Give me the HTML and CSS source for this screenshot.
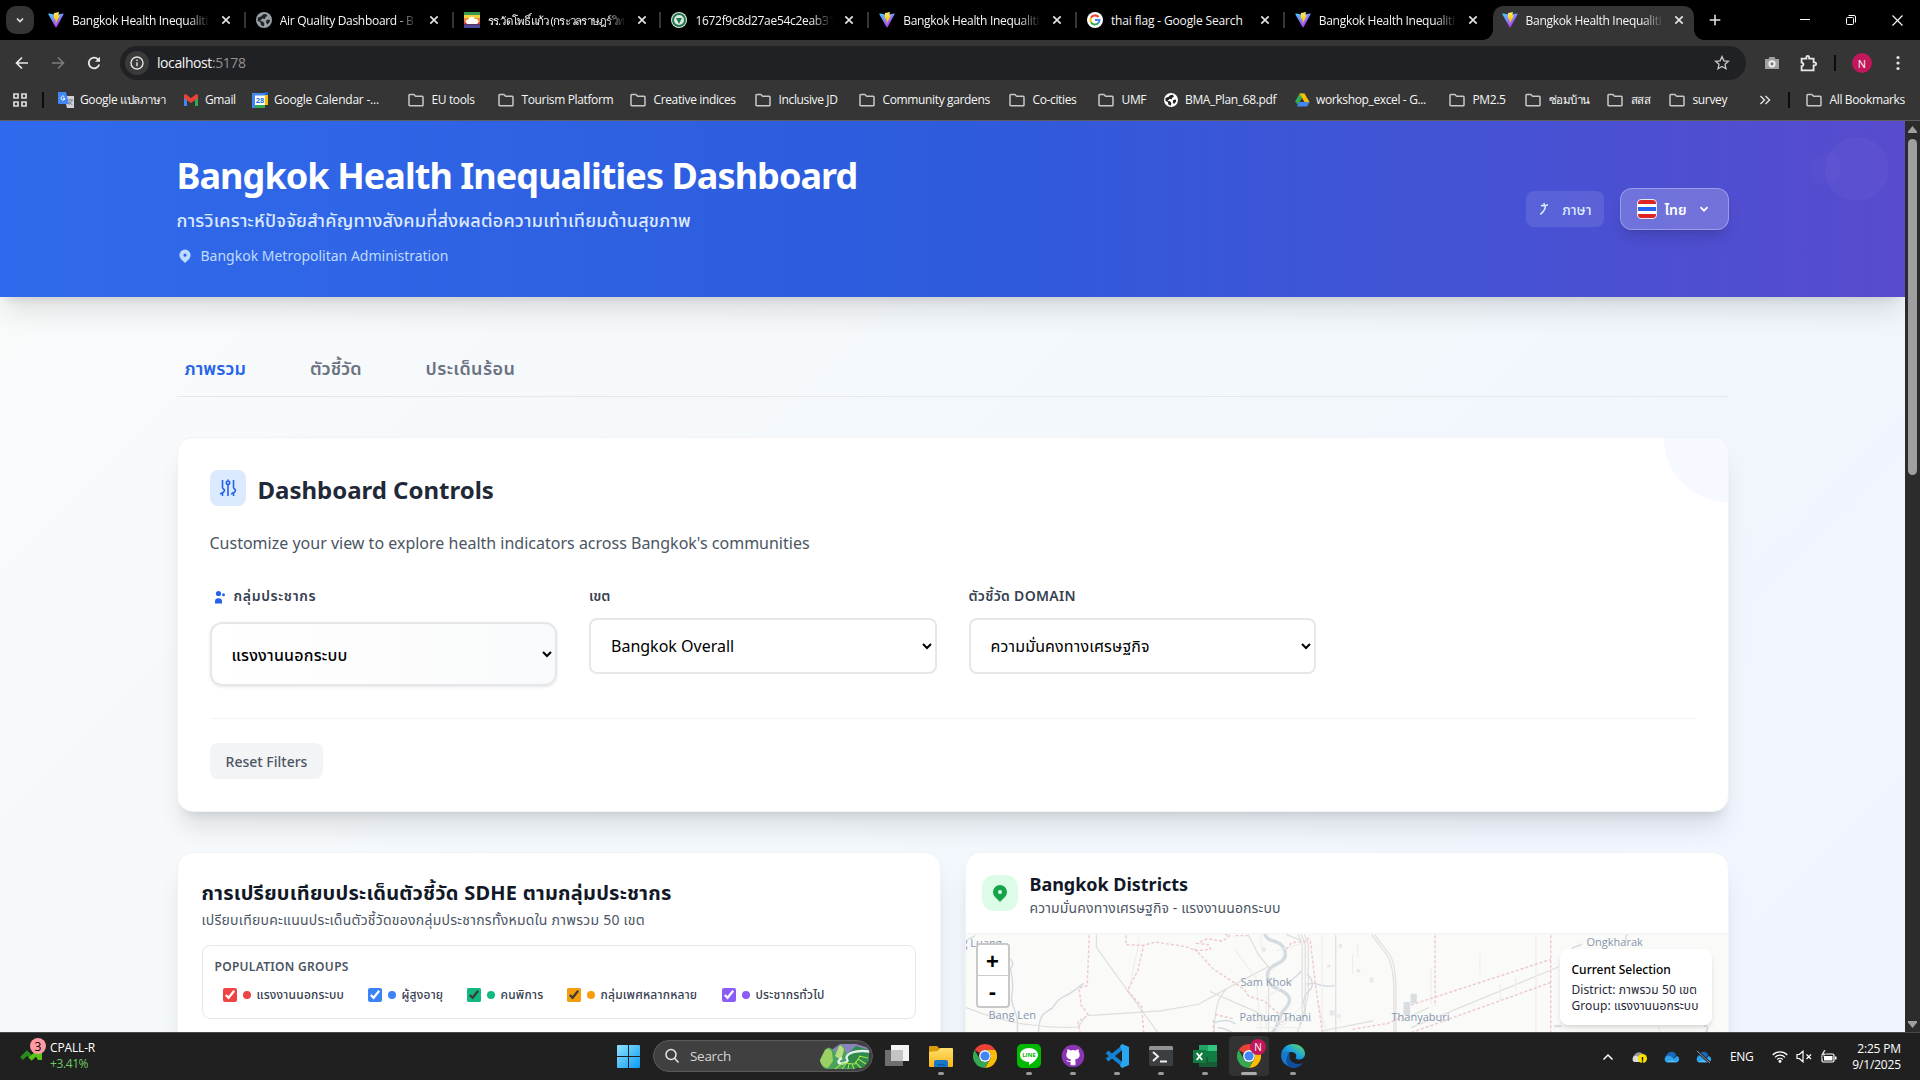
FILE: index.html
```html
<!DOCTYPE html>
<html lang="th">
<head>
<meta charset="utf-8">
<title>Bangkok Health Inequalities Dashboard</title>
<link rel="stylesheet" href="styles.css">
</head>
<body>
<svg class="defs" width="0" height="0" aria-hidden="true">
  <defs>
    <linearGradient id="gv" x1="0" y1="0" x2=".6" y2="1"><stop offset="0" stop-color="#41d1ff"/><stop offset="1" stop-color="#bd34fe"/></linearGradient>
    <linearGradient id="gy" x1="0" y1="0" x2="0" y2="1"><stop offset="0" stop-color="#ffea83"/><stop offset=".3" stop-color="#ffdd35"/><stop offset="1" stop-color="#ffa800"/></linearGradient>
    <linearGradient id="gw" x1="0" y1="0" x2="1" y2="1"><stop offset="0" stop-color="#8fe3ff"/><stop offset="1" stop-color="#0a9bf2"/></linearGradient>
    <linearGradient id="ge" x1="0" y1="1" x2="1" y2="0"><stop offset="0" stop-color="#0c59a4"/><stop offset=".5" stop-color="#1ba1e2"/><stop offset="1" stop-color="#6be04a"/></linearGradient>
    <linearGradient id="gf" x1="0" y1="0" x2="0" y2="1"><stop offset="0" stop-color="#ffdf6e"/><stop offset="1" stop-color="#f9b514"/></linearGradient>
  </defs>
  <symbol id="vite" viewBox="0 0 32 32"><path fill="url(#gv)" d="M31 5.2 17.2 30a1.3 1.3 0 0 1-2.2 0L.9 5.200C.300 4.100 1.200 2.900 2.400 3.100L16 5.500l13.500-2.400c1.200-.2 2.100 1 1.500 2.100z"/><path fill="url(#gy)" d="M22.400.1 12.300 2.100a.4.4 0 0 0-.3.400l-.6 10.600c0 .3.200.5.500.4l2.800-.6-.8 4.100c-.1.300.2.500.4.4l1.800-.5-1.300 6.400c-.1.4.5.6.7.3l8.200-16.600c.1-.3-.1-.6-.4-.5l-3 .6 1.900-6.600c.1-.2-.2-.4-.5-.4z"/></symbol>
  <symbol id="globe" viewBox="0 0 16 16"><circle cx="8" cy="8" r="8" fill="currentColor"/><path class="land" d="M7 2.500 10 2l1.500 2-2 1-.5 2-2.500-.5L4 9l3 .5L8.500 12 7.500 14.500 5 13 4.500 10.500 1.500 8.500 2 5.500l3-1zM10.500 8l3-.5.500 2-2.500 3-1.500-2z"/></symbol>
  <symbol id="x" viewBox="0 0 12 12"><path d="M2.300 2.300l7.400 7.400M9.700 2.300L2.300 9.700" stroke="#e3e3e3" stroke-width="1.700"/></symbol>
  <symbol id="folder" viewBox="0 0 16 16"><path d="M1 3.200c0-.5.300-.8.800-.8h4.100l1.700 1.800h6.600c.5 0 .8.300.8.800v7.900c0 .5-.3.800-.8.800H1.800c-.5 0-.8-.3-.8-.8z" fill="none" stroke="#c7c7c7" stroke-width="1.500"/></symbol>
  <symbol id="chrome" viewBox="0 0 24 24"><path fill="#ea4335" d="M12 0a12 12 0 0 1 10.400 6H12a6 6 0 0 0-5.200 3L1.600 6A12 12 0 0 1 12 0z"/><path fill="#fbbc04" d="M22.400 6A12 12 0 0 1 12 24l5.200-9A6 6 0 0 0 12 6z"/><path fill="#34a853" d="M1.600 6l5.200 9A6 6 0 0 0 17.200 15L12 24A12 12 0 0 1 1.600 6z"/><circle cx="12" cy="12" r="5.900" fill="#fff"/><circle cx="12" cy="12" r="4.600" fill="#4285f4"/></symbol>
  <symbol id="cloud" viewBox="0 0 18 12"><path fill="#1769c0" d="M4 10a4 4 0 0 1 0-6.500A5.500 5.500 0 0 1 14 4l-5 7z"/><path fill="#2ea3ea" d="M3.500 11.500a3.500 3.500 0 0 1 1-6.500c3-1 5 1.500 7 3l3-3a3.400 3.400 0 0 1 .5 6.500z"/><path fill="#56c1f7" d="M3.500 11.500C6 9 10 9 15 11.500z"/></symbol>
  <symbol id="pin" viewBox="0 0 20 20"><path fill="currentColor" fill-rule="evenodd" d="M5.050 4.050a7 7 0 1 1 9.900 9.900L10 18.900l-4.950-4.950a7 7 0 0 1 0-9.900zM10 11a2 2 0 1 0 0-4 2 2 0 0 0 0 4z"/></symbol>
</svg>

<div class="screen">
  <header class="browser">
    <div class="tabstrip">
      <button class="tabsearch"><svg width="10" height="10" viewBox="0 0 10 10"><path d="M2 3.500l3 3 3-3" fill="none" stroke="#e3e3e3" stroke-width="1.700"/></svg></button>
      <div class="tabs">
        <div class="tab"><svg class="fav"><use href="#vite"/></svg><span class="tt">Bangkok Health Inequaliti</span><svg class="cl"><use href="#x"/></svg></div>
        <div class="tab"><svg class="fav gray"><use href="#globe"/></svg><span class="tt">Air Quality Dashboard - B</span><svg class="cl"><use href="#x"/></svg></div>
        <div class="tab"><svg class="fav" viewBox="0 0 16 16"><path fill="#3c9a50" d="M0 0h16v4H0z"/><path fill="#f3d03e" d="M0 3h16v3H0z"/><path fill="#ef8a3c" d="M0 6h16v4H0z"/><path fill="#d8433b" d="M0 10h16v2.500H0z"/><path fill="#4a4a9c" d="M0 12.500h16V16H0z"/><path fill="#fff" d="M4 12a2.300 2.300 0 0 1 .2-4.600A3.600 3.600 0 0 1 11 7a2.500 2.500 0 0 1 1.500 5z"/></svg><span class="tt th">รร.วัดโพธิ์แก้ว (กระวลราษฎร์วิท</span><svg class="cl"><use href="#x"/></svg></div>
        <div class="tab"><svg class="fav" viewBox="0 0 16 16"><circle cx="8" cy="8" r="8" fill="#dfe8e2"/><circle cx="8" cy="8" r="6" fill="none" stroke="#1c7a4c" stroke-width="2"/><path d="M5 6h6l-3 6z" fill="#1c7a4c"/></svg><span class="tt">1672f9c8d27ae54c2eab31</span><svg class="cl"><use href="#x"/></svg></div>
        <div class="tab"><svg class="fav"><use href="#vite"/></svg><span class="tt">Bangkok Health Inequaliti</span><svg class="cl"><use href="#x"/></svg></div>
        <div class="tab"><svg class="fav" viewBox="0 0 16 16"><circle cx="8" cy="8" r="8" fill="#fff"/><g fill="none" stroke-width="2"><path stroke="#ea4335" d="M11.500 5A4.600 4.600 0 0 0 4 5.700"/><path stroke="#fbbc04" d="M4 5.700a4.600 4.600 0 0 0 0 4.600"/><path stroke="#34a853" d="M4 10.300a4.600 4.600 0 0 0 7 1"/><path stroke="#4285f4" d="M11 11.300A4.600 4.600 0 0 0 12.500 8H8"/></g></svg><span class="tt full">thai flag - Google Search</span><svg class="cl"><use href="#x"/></svg></div>
        <div class="tab last"><svg class="fav"><use href="#vite"/></svg><span class="tt">Bangkok Health Inequaliti</span><svg class="cl"><use href="#x"/></svg></div>
        <div class="tab active"><svg class="fav"><use href="#vite"/></svg><span class="tt">Bangkok Health Inequaliti</span><svg class="cl"><use href="#x"/></svg></div>
      </div>
      <svg class="newtab" width="12" height="12" viewBox="0 0 12 12"><path d="M6 .7v10.600M.7 6h10.600" stroke="#e3e3e3" stroke-width="1.600"/></svg>
      <div class="wincontrols">
        <svg width="10" height="10" viewBox="0 0 10 10"><path d="M0 4.500h10" stroke="#fff"/></svg>
        <svg width="10" height="10" viewBox="0 0 10 10" fill="none" stroke="#fff"><rect x=".5" y="2.500" width="7" height="7" rx="1"/><path d="M2.500.5H8A1.500 1.500 0 0 1 9.500 2v5.500"/></svg>
        <svg width="11" height="11" viewBox="0 0 11 11"><path d="M.5.500l10 10M10.500.5l-10 10" stroke="#fff" stroke-width="1.100"/></svg>
      </div>
    </div>

    <div class="toolbar">
      <div class="nav">
        <svg viewBox="0 0 16 16" width="16" height="16" fill="none" stroke="#e8e8e8" stroke-width="1.700"><path d="M14 8H3M8 2.500L2.500 8 8 13.500"/></svg>
        <svg viewBox="0 0 16 16" width="16" height="16" fill="none" stroke="#7d7d7d" stroke-width="1.500"><path d="M2 8h11M8 2.500L13.500 8 8 13.500"/></svg>
        <svg viewBox="0 0 16 16" width="16" height="16"><path d="M13.200 9.500A5.300 5.300 0 1 1 12 4.400l1 1" fill="none" stroke="#e8e8e8" stroke-width="1.800"/><path d="M14 1.800v5H9z" fill="#e8e8e8"/></svg>
      </div>
      <div class="omnibox">
        <span class="info"><svg viewBox="0 0 14 14" width="14" height="14"><circle cx="7" cy="7" r="6" fill="none" stroke="#e3e3e3" stroke-width="1.400"/><path d="M7 6.200v4M7 3.600v1.400" stroke="#e3e3e3" stroke-width="1.400"/></svg></span>
        <span class="url">localhost<i>:5178</i></span>
        <svg class="star" viewBox="0 0 16 16" width="16" height="16"><path d="M8 1.600l1.900 4.200 4.500.5-3.400 3 1 4.500L8 11.500l-4 2.300 1-4.500-3.400-3 4.500-.5z" fill="none" stroke="#c9c9c9" stroke-width="1.300"/></svg>
      </div>
      <div class="ext">
        <svg viewBox="0 0 16 16" width="16" height="16"><path d="M1 4h3.500l1-2h5l1 2H15v10H1z" fill="#a0a0a0"/><circle cx="8" cy="8.800" r="3.600" fill="#eee"/><circle cx="8" cy="8.800" r="1.600" fill="#777"/></svg>
        <svg class="puzzle" viewBox="0 0 16 16" width="17" height="17"><path d="M1.500 3.500H6V2.200a1.300 1.300 0 0 1 2.600 0v1.300h4.200V7h1a1.400 1.400 0 0 1 0 2.800h-1v4.700H1.500v-4a1.700 1.700 0 0 0 0-3.400z" fill="none" stroke="#e8e8e8" stroke-width="1.700"/></svg>
        <i class="vsep"></i>
        <span class="avatar">N</span>
        <svg class="dots" viewBox="0 0 4 16" width="4" height="16" fill="#e3e3e3"><circle cx="2" cy="2.500" r="1.600"/><circle cx="2" cy="8" r="1.600"/><circle cx="2" cy="13.500" r="1.600"/></svg>
      </div>
    </div>

    <div class="bookmarks">
      <svg class="apps" viewBox="0 0 14 14" width="14" height="14" fill="none" stroke="#dcdcdc" stroke-width="1.700"><path d="M1 1h4v4H1zM9 1h4v4H9zM1 9h4v4H1zM9 9h4v4H9z"/></svg>
      <i class="vsep"></i>
      <a class="bm tight w1"><svg viewBox="0 0 16 16"><path fill="#cfd3d8" d="M6 4h10v12H9z"/><path fill="#4285f4" d="M0 0h8l3 12H1a1 1 0 0 1-1-1z"/><path d="M7 6.500A2 2 0 1 1 6.300 4.500M5 6.400h2" stroke="#fff" fill="none"/><path d="M10 8h5M12.500 7v1m1.500 0c0 2-1.500 3.500-3.500 4.500M11 9.500c.5 1 1.500 2.500 3.500 3.500" stroke="#607080" fill="none" stroke-width=".8"/></svg><span>Google <small>แปลภาษา</small></span></a>
      <a class="bm tight w2"><svg viewBox="0 0 16 16"><path fill="#4285f4" d="M1 4l3 2v8H1z"/><path fill="#34a853" d="M12 6l3-2v10h-3z"/><path fill="#ea4335" d="M1 3.500C1 2 3 2 4 3l4 3.200L12 3c1-1 3-1 3 .5V6l-7 5-7-5z"/></svg><span>Gmail</span></a>
      <a class="bm tight w3"><svg viewBox="0 0 16 16"><path fill="#4285f4" d="M0 1h13v15H0z"/><path fill="#fbbc04" d="M13 3h3v10h-3z"/><path fill="#34a853" d="M3 13h10v3H3z"/><path fill="#1967d2" d="M13 0h3v3h-3z"/><path fill="#fff" d="M3 3.500h10V13H3z"/><text x="8" y="11" font-size="7.500" text-anchor="middle" fill="#1a73e8" font-weight="700">28</text></svg><span>Google Calendar -...</span></a>
      <a class="bm w4"><svg><use href="#folder"/></svg><span>EU tools</span></a>
      <a class="bm w5"><svg><use href="#folder"/></svg><span>Tourism Platform</span></a>
      <a class="bm w6"><svg><use href="#folder"/></svg><span>Creative indices</span></a>
      <a class="bm w7"><svg><use href="#folder"/></svg><span>Inclusive JD</span></a>
      <a class="bm w8"><svg><use href="#folder"/></svg><span>Community gardens</span></a>
      <a class="bm w9"><svg><use href="#folder"/></svg><span>Co-cities</span></a>
      <a class="bm w10"><svg><use href="#folder"/></svg><span>UMF</span></a>
      <a class="bm w11"><svg class="white"><use href="#globe"/></svg><span>BMA_Plan_68.pdf</span></a>
      <a class="bm tight w12"><svg viewBox="0 0 16 16"><path fill="#34a853" d="M5.500 1.500h5L4 13 1 9.500z"/><path fill="#fbbc04" d="M10.500 1.500L15.500 10h-5L5.500 1.500z"/><path fill="#ea4335" d="M10.500 10h5L13 14.500z"/><path fill="#4285f4" d="M5.500 10h10L13 14.500H3z"/></svg><span>workshop_excel - G...</span></a>
      <a class="bm w13"><svg><use href="#folder"/></svg><span>PM2.5</span></a>
      <a class="bm w14"><svg><use href="#folder"/></svg><span><small>ซ่อมบ้าน</small></span></a>
      <a class="bm w15"><svg><use href="#folder"/></svg><span><small>สสส</small></span></a>
      <a class="bm w16"><svg><use href="#folder"/></svg><span>survey</span></a>
      <svg class="more" viewBox="0 0 12 10" width="12" height="10" fill="none" stroke="#dcdcdc" stroke-width="1.500"><path d="M1.500 1l4 4-4 4M6.500 1l4 4-4 4"/></svg>
      <i class="vsep"></i>
      <a class="bm w17"><svg><use href="#folder"/></svg><span>All Bookmarks</span></a>
    </div>
  </header>

  <div class="viewport">
    <main class="page">
      <section class="hero">
        <i class="bubble big"></i><i class="bubble small"></i>
        <div class="container hero-row">
          <div class="hero-text">
            <h1>Bangkok Health Inequalities Dashboard</h1>
            <p class="hero-sub">การวิเคราะห์ปัจจัยสำคัญทางสังคมที่ส่งผลต่อความเท่าเทียมด้านสุขภาพ</p>
            <p class="hero-org"><svg width="16" height="16"><use href="#pin"/></svg><span>Bangkok Metropolitan Administration</span></p>
          </div>
          <div class="lang">
            <span class="lang-label"><svg width="14" height="14" viewBox="0 0 14 14" fill="none" stroke="currentColor" stroke-width="1.500"><path d="M4 3.300c2 .8 4 .8 7-.5M6.800 1l.8 2.500M8.300 3.500c.5 4-1.500 6-5 8.800"/></svg><b>ภาษา</b></span>
            <button class="lang-btn"><i class="flag"></i><b>ไทย</b><svg width="10" height="10" viewBox="0 0 10 10"><path d="M1.500 3.200L5 6.700l3.500-3.500" fill="none" stroke="#fff" stroke-width="1.700"/></svg></button>
          </div>
        </div>
      </section>

      <div class="container body">
        <nav class="page-tabs"><a class="on">ภาพรวม</a><a>ตัวชี้วัด</a><a class="hot">ประเด็นร้อน</a></nav>

        <section class="card controls">
          <i class="corner"></i>
          <div class="controls-head">
            <span class="icon-box"><svg width="20" height="20" viewBox="0 0 20 20" fill="none" stroke="#2563eb" stroke-width="1.600"><path d="M4.500 2v7.500c0 1.500 2 1.500 2 3s-2 1.500-2 3V18M10 6.500V18M15.500 2v7.500c0 1.500 2 1.500 2 3s-2 1.500-2 3V18M10 1.500v1"/><circle cx="10" cy="4.700" r="1.700"/><path d="M2.500 16.500c0-1.500 2-1 2-2.500M13.500 16.500c0-1.500 2-1 2-2.500"/></svg></span>
            <h2>Dashboard Controls</h2>
          </div>
          <p class="controls-text">Customize your view to explore health indicators across Bangkok's communities</p>
          <div class="fields">
            <div class="field first">
              <label><svg width="16" height="16" viewBox="0 0 16 16" fill="#2563eb"><circle cx="5.500" cy="4.500" r="2.600"/><path d="M2 14.500v-2A3.200 3.200 0 0 1 5.200 9.300h.6a3.200 3.200 0 0 1 3.200 3.200v2z"/><circle cx="10.500" cy="5.800" r="1.500"/></svg><span>กลุ่มประชากร</span></label>
              <select><option>แรงงานนอกระบบ</option></select>
            </div>
            <div class="field"><label><span>เขต</span></label><select><option>Bangkok Overall</option></select></div>
            <div class="field"><label><span class="dom">ตัวชี้วัด DOMAIN</span></label><select class="th"><option>ความมั่นคงทางเศรษฐกิจ</option></select></div>
          </div>
          <div class="controls-foot"><button class="reset">Reset Filters</button></div>
        </section>

        <div class="grid">
          <section class="card compare">
            <h3>การเปรียบเทียบประเด็นตัวชี้วัด SDHE ตามกลุ่มประชากร</h3>
            <p>เปรียบเทียบคะแนนประเด็นตัวชี้วัดของกลุ่มประชากรทั้งหมดใน ภาพรวม 50 เขต</p>
            <div class="groups">
              <h4>POPULATION GROUPS</h4>
              <div class="checks">
                <label class="c-red"><input type="checkbox" checked><i></i><span>แรงงานนอกระบบ</span></label>
                <label class="c-blue"><input type="checkbox" checked><i></i><span>ผู้สูงอายุ</span></label>
                <label class="c-green"><input type="checkbox" checked><i></i><span>คนพิการ</span></label>
                <label class="c-amber"><input type="checkbox" checked><i></i><span>กลุ่มเพศหลากหลาย</span></label>
                <label class="c-violet"><input type="checkbox" checked><i></i><span>ประชากรทั่วไป</span></label>
              </div>
            </div>
          </section>

          <section class="card districts">
            <div class="districts-head">
              <span class="icon-box green"><svg width="20" height="20"><use href="#pin"/></svg></span>
              <div><h3>Bangkok Districts</h3><p>ความมั่นคงทางเศรษฐกิจ - แรงงานนอกระบบ</p></div>
            </div>
            <div class="map">
              <svg class="tiles" viewBox="31 280 1496 296" preserveAspectRatio="none" fill="none">
                <g class="water">
                  <path class="river" d="M617 280c5 14 8 16 14 19 14 6 22 14 24 24 5 16 4 28-4 38-9 10-20 14-24 24-7 12-4 36 4 48 8 12 28 16 34 36 4 14-4 30-12 42-6 14-6 40-22 66"/>
                  <path d="M31 300c6-8 14-8 18-16M118 355c8 12 4 20 0 30 6 30 6 60 2 86 2 30 10 40 12 70v35M262 428c-12 12-24 30-40 40-14 10-16 24-22 34-10 10-18 14-22 30-6 20-2 36-6 44M690 390c-10 20-22 24-24 40M700 400c10 10 14 30 8 44-16 20-16 40-12 58 4 20-10 30-14 40M700 430c20-10 30 14 54 4M1330 282c-10 8 4 14-8 22M1220 325c8-12 16-8 20-16M1480 555c10 0 8 10 4 16 6 8 10 2 20 8M520 545c16-10 30-8 40 4M525 560c10 0 20 6 30 16M650 545c10-8 12-16 20-20"/>
                </g>
                <g class="road">
                  <path d="M287 282v38l121 256M270 524l143-14 75-20 56-48 80-64M544 442c-20 30-24 60-26 134M510 452l90 60 50 40M31 500c40 24 90 46 130 52 30 6 60 10 90 6l14-28M905 560l290-182M830 540l-100 30M940 500l-56 40"/>
                  <path d="M683 282l8 28v220l-10 46M689 282l8 28v220M695 282l8 28v150l-14 90M827 282l30 60c10 24 14 60 14 110v124M833 282l30 60c10 24 12 60 12 110v124M585 282l20 60 20 36v198M757 282v294M660 282l30 18"/>
                  <path class="thin" d="M370 290v20l-20 140M560 330l40 80 10 160M730 282v290M790 340v60M944 382v110M1150 282v294M1040 340v60M650 440l-30 30v100M590 540h120M600 560h90M700 480l-60 96M765 520v20M800 310v40M1080 430v50M1110 410v40M1390 555l5 20M640 330l50-20M720 480l20 96M610 282v40"/>
                </g>
                <g class="border">
                  <path d="M273 284l-4 150-16 8 4 50 14 30-20 20 4 34M345 284v28l34 2 24-10 60 14 20 12 28-4-4-14-22-4 20-14 30 8 14-18-18-6M560 285l24 0M480 324l36 60 60 60 10 22 30 14 30 40M380 576l-4-80-28-46 20-60 12-76M517 576l0-40M660 326l10-20 30-4 6-18M707 300l10 130 14 146M952 284v210M905 492l274-136M1179 284v292M1179 425l-274 150"/><path d="M790 565l70-18 40-30M520 520l36 14"/>
                </g>
                <path class="block" d="M904 459h12v28h-12zM890 483h13v40h-13zM1186 552h14v7h-14z"/>
                <path class="block faint" d="M763 310h6v10h-6zM740 372h6v8h-6zM760 520h6v10h-6zM798 385h7v10h-7zM824 410h7v14h-7zM745 508h10v16h-10zM612 318l8 4-2 14-6-6z"/>
              </svg>
              <span class="town t1">g Luang</span><span class="town t2">Bang Len</span><span class="town t3">Sam Khok</span><span class="town t4">Pathum Thani</span><span class="town t5">Thanyaburi</span><span class="town t6">Ongkharak</span>
              <div class="zoomer"><b>+</b><b>-</b></div>
              <div class="legend"><strong>Current Selection</strong><span>District: ภาพรวม 50 เขต</span><span>Group: แรงงานนอกระบบ</span></div>
            </div>
          </section>
        </div>
      </div>
    </main>
    <div class="scrollbar">
      <svg width="9" height="7" viewBox="0 0 9 7"><path d="M4.500 0L9 5.500V7H0V5.500z" fill="#9f9f9f"/></svg>
      <i></i>
      <svg class="down" width="9" height="7" viewBox="0 0 9 7"><path d="M4.500 7L9 1.500V0H0v1.500z" fill="#9f9f9f"/></svg>
    </div>
  </div>

  <footer class="taskbar">
    <div class="widget">
      <span class="stock"><svg width="22" height="16" viewBox="0 0 22 16"><path d="M1.500 11.500L7 6l5 5 7-7" fill="none" stroke="#2b8a1e" stroke-width="4"/><path d="M10 12l8-7" fill="none" stroke="#5cc414" stroke-width="4"/><path d="M12 3h10v10h-4z" fill="#5cc414"/></svg><em>3</em></span>
      <div><b>CPALL-R</b><u>+3.41%</u></div>
    </div>
    <div class="center">
      <svg class="win" viewBox="0 0 23 23" width="23" height="23" fill="url(#gw)"><path d="M0 1a1 1 0 0 1 1-1h10v11H0zM12 0h10a1 1 0 0 1 1 1v10H12zM0 12h11v11H1a1 1 0 0 1-1-1zM12 12h11v10a1 1 0 0 1-1 1H12z"/></svg>
      <div class="search"><svg width="16" height="16" viewBox="0 0 16 16" fill="none" stroke="#e8e8e8" stroke-width="1.500"><circle cx="7" cy="6.500" r="5"/><path d="M10.500 10.300l4 4.200"/></svg><span>Search</span>
        <svg class="art" width="50" height="26" viewBox="0 0 50 26"><path d="M10 8l10-7h16l13 4v12l-20 6-19-4z" fill="#8a84bd"/><path d="M0 17L5 7q4-5 8 0l3 3 2-6q3-5 6 1l4 8 8-3 6 12-8 4H6Q1 24 0 17z" fill="#4aa35c"/><path d="M0 17L5 7q4-4 7 2l1 9-5 7Q1 24 0 17z" fill="#9bd062"/><path d="M27 11l9-8 13 4v11l-5 7H24z" fill="#2f8a4c"/><path d="M15 13l4-10q3-2 5 4l-3 10z" fill="#b7dd7e"/><path d="M50 8.500c-13-1.500-21 1-23 4.500s4 5-3 7-7-2-2-5" fill="none" stroke="#e3eef0" stroke-width="2.400"/><path d="M15 26l8-6 12 1 5-8M22 26l4-5M28 26l1-5M34 26l-2-5M41 25l-6-6M46 21l-8-5M48 15l-9-2" stroke="#a4e245" stroke-width="1.100" fill="none"/></svg></div>
      <div class="apps-row">
        <span><svg width="24" height="24" viewBox="0 0 24 24"><path fill="#6f6f6f" d="M0 6h18v16H0z"/><path fill="#f4f4f4" d="M6 1h18v16H6z"/><path fill="#c4c4c4" d="M6 6h12v11H6z"/></svg></span>
        <span class="run"><svg width="24" height="24" viewBox="0 0 24 24"><path fill="#d99a0b" d="M0 3a1 1 0 0 1 1-1h7l3 3v6H0z"/><path fill="url(#gf)" d="M0 8l9-1 2-3h12a1 1 0 0 1 1 1v17a1 1 0 0 1-1 1H1a1 1 0 0 1-1-1z"/><path fill="#1878c8" d="M5 23v-5a2 2 0 0 1 2-2h10a2 2 0 0 1 2 2v5z"/><path fill="#0c5da8" d="M8 20h8v1.500H8z"/></svg></span>
        <span><svg width="24" height="24"><use href="#chrome"/></svg></span>
        <span class="run"><svg width="24" height="24" viewBox="0 0 24 24"><rect width="24" height="24" rx="5" fill="#00b900"/><path fill="#fff" d="M12 4c5 0 9 3 9 7 0 3.500-5 7.500-9 10v-3c-5 0-9-3-9-7s4-7 9-7z"/><text x="12" y="13.300" font-size="6" font-weight="700" text-anchor="middle" fill="#00b900">LINE</text></svg></span>
        <span class="run"><svg width="24" height="24" viewBox="0 0 24 24"><circle cx="12" cy="12" r="11.300" fill="#8a35b4"/><path fill="#fff" d="M9.500 21v-3c-3 .6-3.500-1.500-4.500-2 1.500-.3 2 1.500 4.500.9 0-.7.300-1.100.6-1.400-3-.4-4.800-1.700-4.800-4.700 0-1.200.4-2 1-2.800-.2-1-.1-2 .2-2.700 1 0 1.900.5 2.800 1.100a9 9 0 0 1 5.400 0c.9-.6 1.800-1.100 2.800-1.100.3.700.4 1.700.2 2.700.6.800 1 1.600 1 2.800 0 3-1.800 4.300-4.800 4.700.4.400.6 1 .6 1.800V21a10 10 0 0 1-5 0z"/></svg></span>
        <span class="run"><svg width="24" height="24" viewBox="0 0 24 24"><path d="M18 3L2 16M18 21L2 8" stroke="#1283cf" stroke-width="4"/><path d="M17 0l7 3v18l-7 3-2-2 2-4V6l-2-4z" fill="#2aa7f0"/></svg></span>
        <span class="run"><svg width="24" height="24" viewBox="0 0 24 24"><rect y="2" width="24" height="20" rx="1.500" fill="#3c3f41"/><path d="M0 3.500A1.500 1.500 0 0 1 1.500 2h21A1.500 1.500 0 0 1 24 3.500V6H0z" fill="#8f9396"/><path d="M4 8l5 4.500L4 17M11 17.500h7" fill="none" stroke="#eee" stroke-width="2"/></svg></span>
        <span class="run"><svg width="24" height="24" viewBox="0 0 24 24"><path fill="#21a366" d="M6 1h18v6H6z"/><path fill="#33c481" d="M15 1h9v6h-9z"/><path fill="#107c41" d="M6 7h18v6H6z"/><path fill="#185c37" d="M6 13h18v10H6z"/><path fill="#107c41" d="M15 13h9v5h-9zM0 6h13v13H0z"/><path d="M3.700 9l5.500 7M9.200 9l-5.500 7" stroke="#fff" stroke-width="1.900"/></svg></span>
        <span class="run active"><svg width="24" height="24"><use href="#chrome"/></svg><em>N</em></span>
        <span class="run"><svg width="24" height="24" viewBox="0 0 24 24"><path fill="url(#ge)" d="M0 12C0 5 5 0 12 0s12 5 12 9.500c0 4-3 6-6 6s-4-1-3-2.500c1-2-1-5-4.500-5C6 8 1 10 0 12z"/><path fill="#1a78cc" d="M0 12c1-3 5-4.500 9-3.500-2 2-3 4-2.500 7 1 5 6 7.500 13 5A12 12 0 0 1 0 12z"/><path fill="#0f4f9e" d="M9.500 9c-3 5 1 11 8 11 2 0 4-1 4.500-1.500-2 3.500-6 5.500-10 5.500-8-1-9-11-2.500-15z"/></svg></span>
      </div>
    </div>
    <div class="tray">
      <svg width="12" height="8" viewBox="0 0 12 8"><path d="M1.500 6.500L6 2l4.500 4.500" fill="none" stroke="#fff" stroke-width="1.500"/></svg>
      <span class="warn"><svg width="16" height="12" viewBox="0 0 18 12"><path fill="#9b9b9b" d="M4 10a4 4 0 0 1 0-6.500A5.500 5.500 0 0 1 14 4l2 6z"/><path fill="#dcdcdc" d="M3.500 11.500a3.500 3.500 0 0 1 1-6.500c3-1 5 1.500 7 3v3.500z"/></svg><em>!</em></span>
      <svg width="17" height="12"><use href="#cloud"/></svg>
      <span class="slash"><svg width="17" height="12"><use href="#cloud"/></svg><svg class="line" width="17" height="14" viewBox="0 0 17 14"><path d="M2 1l13 12" stroke="#202020" stroke-width="2.400"/><path d="M2 1l13 12" stroke="#9a9a9a" stroke-width="1"/></svg></span>
      <span class="eng">ENG</span>
      <svg class="wifi" width="16" height="13" viewBox="0 0 16 13" fill="none" stroke="#fff" stroke-width="1.200"><path d="M.7 5a10.300 10.300 0 0 1 14.600 0M3 7.300a7 7 0 0 1 10 0M5.200 9.500a4 4 0 0 1 5.600 0"/><circle cx="8" cy="11.300" r=".9" fill="#fff"/></svg>
      <svg class="mute" width="16" height="13" viewBox="0 0 16 13" fill="none" stroke="#fff" stroke-width="1.200"><path d="M1 4.500h2.300L7 1.200v10.600L3.300 8.500H1zM10.500 4.500l4.500 4.500M15 4.500L10.500 9"/></svg>
      <svg class="batt" width="17" height="14" viewBox="0 0 17 14"><rect x="2" y="4" width="12" height="8" rx="1.500" fill="none" stroke="#fff" stroke-width="1.200"/><path d="M4 6h8.500v4.500H4zM15 6.500h1.500v3H15z" fill="#fff"/><path d="M4 0L1 5h2.500L2 8.500l4-5H3.800L6 0z" fill="#fff" stroke="#202020" stroke-width=".5"/></svg>
      <div class="clock"><span>2:25 PM</span><span>9/1/2025</span></div>
    </div>
  </footer>
</div>
</body>
</html>
```
FILE: styles.css
```css
* { box-sizing: border-box; }
html, body { margin: 0; height: 100%; overflow: hidden; }
body { font-family: "Noto Sans", "Noto Sans Thai", sans-serif; font-size: 16px; color: #111827; background: #202020; }
h1, h2, h3, h4, p { margin: 0; }
svg { display: block; flex: none; }
i, em { font-style: normal; }
u { text-decoration: none; }
button, select { font-family: inherit; }
.defs { position: absolute; }
.screen { width: 1920px; height: 1080px; display: flex; flex-direction: column; overflow: hidden; }

/* browser chrome */
.browser { height: 121px; flex: none; background: #353535; border-bottom: 1px solid #5e5e5e; color: #f6f6f6; font-family: "Open Sans", "Noto Sans", sans-serif; font-size: 12px; }
.tabstrip { height: 40px; background: #000; display: flex; align-items: center; padding-left: 6px; }
.tabsearch { width: 28px; height: 28px; border: 0; border-radius: 10px; background: #353535; padding: 0; display: grid; place-items: center; }
.tabs { display: flex; height: 40px; padding-left: 5px; }
.tab { width: 207.8px; height: 40px; display: flex; align-items: center; padding: 0 13px 0 9px; position: relative; }
.tab:not(.last):not(.active)::after { content: ""; position: absolute; right: 1px; top: 12px; width: 2px; height: 16px; background: #353535; }
.fav { width: 16px; height: 16px; margin-right: 8px; flex: none; }
.fav.gray { color: #9aa0a6; }
.land { fill: #202124; }
.tt { width: 138px; flex: none; letter-spacing: -.3px; white-space: nowrap; line-height: 20px; padding-top: 1px; -webkit-mask-image: linear-gradient(90deg, #000 84%, transparent); mask-image: linear-gradient(90deg, #000 84%, transparent); }
.tt.full { -webkit-mask-image: none; mask-image: none; letter-spacing: -.15px; }
.tt.th { letter-spacing: -.75px; font-size: 11.500px; }
.cl { width: 12px; height: 12px; margin-left: 10px; }
.tab.active { width: 201px; height: 34px; margin-top: 6px; background: #353535; border-radius: 10px 10px 0 0; padding-bottom: 6px; margin-left: -1px; }
.tab.active .cl { margin-left: 9px; }
.tab.active::before, .tab.active::after { content: ""; position: absolute; bottom: 0; width: 10px; height: 10px; }
.tab.active::before { left: -10px; background: radial-gradient(circle at 0 0, transparent 9.500px, #353535 10px); }
.tab.active::after { right: -10px; background: radial-gradient(circle at 100% 0, transparent 9.500px, #353535 10px); }
.newtab { margin-left: 15px; }
.wincontrols { display: flex; gap: 36px; margin-left: auto; padding-right: 17px; }
.toolbar { height: 46px; display: flex; align-items: center; }
.nav { display: flex; gap: 20px; padding-left: 14px; width: 120px; }
.omnibox { width: 1626px; height: 34px; border-radius: 17px; background: #202124; display: flex; align-items: center; padding: 0 16px 0 5px; }
.info { width: 24px; height: 24px; border-radius: 50%; background: #3a3a3a; display: grid; place-items: center; }
.url { margin-left: 8px; font-size: 14px; letter-spacing: -.42px; flex: 1; margin-bottom: 1px; }
.url i { color: #919191; }
.ext { display: flex; align-items: center; padding-left: 18px; }
.puzzle { margin: 0 17px 0 20px; }
.vsep { width: 2px; height: 16px; background: #0b0b0b; }
.avatar { width: 20px; height: 20px; border-radius: 50%; background: #c2185b; display: grid; place-items: center; font-size: 11px; margin: 0 24px 0 16px; }
.bookmarks { height: 28px; display: flex; align-items: center; padding-left: 13px; }
.bookmarks .vsep { margin: 0 14px 0 15px; }
.bm { display: flex; align-items: center; white-space: nowrap; }
.bm svg { width: 16px; height: 16px; margin-right: 7.500px; }
.bm.tight svg { margin-right: 6px; }
.bm .white { color: #fff; width: 14px; margin-right: 7px; }
.bm span { letter-spacing: -.36px; margin-bottom: 1px; }
.bm.w3 span { letter-spacing: -.22px; }
.bm small { font-size: 11.500px; letter-spacing: -.5px; }
.w1 { width: 125px; } .w2 { width: 69px; } .w3 { width: 156px; } .w4 { width: 90px; } .w5 { width: 132px; } .w6 { width: 125px; } .w7 { width: 104px; } .w8 { width: 150px; } .w9 { width: 89px; } .w10 { width: 66px; } .w11 { width: 130px; } .w12 { width: 155px; } .w13 { width: 76px; } .w14 { width: 82px; } .w15 { width: 62px; } .w16 { width: 91px; }
.bookmarks .more { margin-left: -1px; }
.bookmarks .more + .vsep { margin: 0 16px 0 17px; }

/* page */
.viewport { height: 911px; flex: none; display: flex; overflow: hidden; }
.page { width: 1905px; height: 911px; overflow: hidden; background: linear-gradient(135deg, #fafbfb 0%, #f3f8fc 50%, #eff4ff 100%); }
.container { width: 1552px; margin: 0 auto; }
.hero { position: relative; height: 176px; background: linear-gradient(90deg, #306aec 0%, #2d5bdc 50%, #584bce 100%); box-shadow: 0 20px 25px -5px rgba(0, 0, 0, .1), 0 8px 10px -6px rgba(0, 0, 0, .1); }
.bubble { position: absolute; border-radius: 50%; background: rgba(255, 255, 255, .03); }
.bubble.big { width: 64px; height: 64px; right: 16px; top: 16px; }
.bubble.small { width: 32px; height: 32px; right: 64px; top: 32px; background: rgba(255, 255, 255, .015); }
.hero-row { display: flex; justify-content: space-between; align-items: center; height: 176px; }
.hero-text { padding-top: 3px; }
h1 { color: #fff; font-size: 36px; line-height: 40px; font-weight: 700; letter-spacing: -.94px; }
.hero-sub { color: #dbeafe; font-size: 18px; font-weight: 500; letter-spacing: .22px; line-height: 28px; margin-top: 10px; white-space: nowrap; }
.hero-org { color: #bfdbfe; font-size: 14px; line-height: 20px; margin-top: 12px; display: flex; align-items: center; gap: 8px; }
.lang { display: flex; align-items: center; gap: 16px; }
.lang-label { width: 78px; height: 36px; border-radius: 8px; background: rgba(255, 255, 255, .1); color: #dbeafe; display: flex; align-items: center; justify-content: space-between; padding: 0 12px 0 11px; font-size: 14px; }
.lang b { font-weight: 500; padding-top: 2px; }
.lang-btn { width: 109px; height: 42px; border-radius: 12px; border: 1px solid rgba(255, 255, 255, .3); background: rgba(255, 255, 255, .2); color: #fff; font-size: 14px; display: flex; align-items: center; padding: 0 0 0 16px; box-shadow: 0 10px 15px -3px rgba(0, 0, 0, .12), 0 4px 6px -4px rgba(0, 0, 0, .12); }
.lang .lang-btn b { width: 24px; margin: 0 11px 0 7px; font-weight: 600; }
.flag { width: 20px; height: 20px; border-radius: 4px; border: 1px solid #e9e6f5; background: linear-gradient(#dc2626 0 22%, #fff 22% 39%, #2563eb 39% 61%, #fff 61% 78%, #dc2626 78%); }
.page-tabs { height: 100px; border-bottom: 1px solid #e5e7eb; display: flex; gap: 64px; padding: 59px 8px 0; font-size: 18px; font-weight: 600; line-height: 24px; color: #6b7280; }
.page-tabs .on { color: #2563eb; }
.page-tabs .hot { letter-spacing: .4px; }

.card { background: #fff; border: 1px solid #f1f3f5; border-radius: 16px; box-shadow: 0 20px 25px -5px rgba(0, 0, 0, .1), 0 8px 10px -6px rgba(0, 0, 0, .1); position: relative; overflow: hidden; }
.controls { margin-top: 40px; height: 375px; padding: 32px; }
.corner { position: absolute; right: -64px; top: -64px; width: 128px; height: 128px; border-radius: 50%; background: #f6f9ff; }
.controls-head { display: flex; gap: 12px; }
.icon-box { width: 36px; height: 36px; border-radius: 8px; background: #dbeafe; display: grid; place-items: center; }
h2 { font-size: 24px; line-height: 32px; font-weight: 700; color: #1f2937; margin-top: 4px; letter-spacing: -.02px; }
.controls-text { font-size: 16px; line-height: 24px; color: #4b5563; margin-top: 25px; }
.fields { display: flex; gap: 32px; margin-top: 29px; height: 134px; }
.field { width: 347.500px; }
.field label { display: flex; align-items: center; height: 24px; font-size: 14px; font-weight: 600; color: #374151; padding-top: 1px; }
.first label span { letter-spacing: .65px; }
.field label svg { margin: 0 5px 0 3px; }
.dom { letter-spacing: .3px; }
.field select { display: block; width: 100%; height: 56px; border: 2px solid #e5e7eb; border-radius: 8px; background: #fff; color: #000; font-size: 16px; padding: 0 0 0 16px; margin-top: 10px; }
.field select.th { letter-spacing: .16px; }
.field.first select { height: 64px; border-radius: 12px; margin-top: 14px; padding-top: 1px; font-weight: 500; letter-spacing: .2px; background: linear-gradient(90deg, #fff, #f9fafb); box-shadow: 0 1px 3px rgba(0, 0, 0, .1); }
.controls-foot { border-top: 1px solid #f3f4f6; padding-top: 24px; }
.reset { width: 113px; height: 36px; border: 0; border-radius: 8px; background: #f3f4f6; color: #4b5563; font-size: 14px; font-weight: 500; padding: 0 0 0 1px; }

.grid { display: grid; grid-template-columns: 1fr 1fr; gap: 24px; margin-top: 40px; }
.grid .card { height: 300px; }
.compare { padding: 24px; }
.compare h3 { font-size: 20px; line-height: 28px; font-weight: 700; white-space: nowrap; margin-top: 2px; letter-spacing: .23px; }
.compare p { font-size: 14px; line-height: 20px; color: #4b5563; margin-top: 3px; white-space: nowrap; letter-spacing: .25px; }
.groups { margin-top: 15px; height: 74px; border: 1px solid #e5e7eb; border-radius: 8px; padding: 13px 12px; }
h4 { font-size: 12px; line-height: 16px; font-weight: 600; color: #4b5563; letter-spacing: .3px; }
.checks { display: flex; padding: 12px 0 0 8px; }
.checks label { display: flex; align-items: center; height: 16px; font-size: 12px; color: #374151; white-space: nowrap; font-weight: 500; letter-spacing: .2px; }
.checks input { width: 14px; height: 14px; margin: 0 6px 0 0; }
.checks i { width: 8px; height: 8px; border-radius: 50%; margin-right: 6px; }
.c-red { width: 145px; } .c-red input { accent-color: #ef4444; } .c-red i { background: #ef4444; }
.c-blue { width: 99px; } .c-blue input { accent-color: #3b82f6; } .c-blue i { background: #3b82f6; }
.c-green { width: 100px; } .c-green input { accent-color: #10b981; } .c-green i { background: #10b981; }
.c-amber { width: 155px; } .c-amber input { accent-color: #f59e0b; } .c-amber i { background: #f59e0b; }
.c-violet input { accent-color: #8b5cf6; } .c-violet i { background: #8b5cf6; }

.districts-head { height: 81px; border-bottom: 1px solid #f1f3f5; display: flex; align-items: flex-start; gap: 12px; padding: 17px 16px 0; }
.districts-head .icon-box { margin-top: 5px; }
.icon-box.green { background: #dcfce7; color: #16a34a; border-radius: 12px; }
.districts h3 { font-size: 18px; line-height: 28px; font-weight: 700; letter-spacing: -.03px; }
.districts p { font-size: 14px; line-height: 20px; color: #4b5563; white-space: nowrap; letter-spacing: .15px; }
.map { position: relative; height: 220px; background: #fafaf8; }
.tiles { width: 100%; height: 99px; }
.tiles path { vector-effect: non-scaling-stroke; }
.water { stroke: #d5dce1; stroke-width: 1.500; }
.water .river { stroke-width: 3.500; }
.road { stroke: #dedede; stroke-width: 1.200; }
.road .thin { stroke: #eeeeec; }
.border { stroke: #ecc9cc; stroke-width: 1.400; stroke-dasharray: 3 2; }
.block { fill: #d7dde1; }
.block.faint { fill: #e6e9ea; }
.town { position: absolute; font-family: "Open Sans", "Noto Sans", sans-serif; font-size: 11px; font-weight: 500; line-height: 14px; color: #8494ab; white-space: nowrap; text-shadow: 0 0 2px #fff; }
.t1 { left: -4px; top: 2px; } .t2 { left: 23px; top: 74px; } .t3 { left: 275px; top: 41px; } .t4 { left: 274px; top: 76px; } .t5 { left: 426px; top: 76px; } .t6 { left: 621px; top: 1px; }
.zoomer { position: absolute; left: 10px; top: 9px; width: 34px; border: 2px solid #c8c8c7; border-radius: 4px; background: #fff; }
.zoomer b { display: block; height: 30px; text-align: center; font: 700 22px/32px "Liberation Sans", sans-serif; color: #000; }
.zoomer b:first-child { height: 31px; line-height: 34px; border-bottom: 1px solid #ccc; }
.legend { position: absolute; left: 594px; top: 15px; width: 152px; height: 76px; padding: 13px 12px; border-radius: 8px; background: #fff; box-shadow: 0 4px 6px -1px rgba(0, 0, 0, .1), 0 2px 4px -2px rgba(0, 0, 0, .1); font-size: 12px; line-height: 16px; color: #1f2937; }
.legend strong, .legend span { display: block; white-space: nowrap; }
.legend span { letter-spacing: .08px; }
.legend strong { font-weight: 500; color: #000; margin-bottom: 4px; }

.scrollbar { width: 15px; background: #2c2c2c; display: flex; flex-direction: column; align-items: center; padding: 5px 0 4px; }
.scrollbar i { width: 9px; height: 336px; border-radius: 5px; background: #9f9f9f; margin-top: 6px; }
.scrollbar .down { margin-top: auto; }

/* taskbar */
.taskbar { height: 48px; flex: none; background: #202020; border-top: 1px solid #4a4a4a; color: #fff; font-family: "Open Sans", "Noto Sans", sans-serif; font-size: 12px; display: grid; grid-template-columns: 617px 1fr auto; }
.widget { display: flex; gap: 8px; padding: 5px 0 0 20px; }
.widget b, .widget u { display: block; line-height: 16px; font-weight: 400; letter-spacing: -.15px; }
.widget > div { padding-top: 2px; }
.widget u { color: #6ccb5f; letter-spacing: -.4px; }
.stock { position: relative; padding-top: 9px; }
.stock em { position: absolute; left: 10px; top: 0; width: 16px; height: 16px; border-radius: 50%; background: #ff99a4; color: #000; display: grid; place-items: center; font-size: 12px; }
.center { display: flex; align-items: center; padding-bottom: 1px; }
.search { width: 220px; height: 32px; border-radius: 16px; border: 1px solid #5a5a5a; background: #404040; margin-left: 13px; display: flex; align-items: center; padding-left: 10px; font-size: 13.500px; color: #d5d5d5; }
.search span { margin-left: 10px; letter-spacing: -.3px; }
.search .art { margin-left: auto; margin-right: 2px; border-radius: 0 13px 13px 0; }
.apps-row { display: flex; gap: 4px; margin-left: 4px; }
.apps-row span { width: 40px; height: 40px; display: grid; place-items: center; position: relative; border-radius: 4px; }
.run::after { content: ""; position: absolute; bottom: 1px; left: 17px; width: 6px; height: 3px; border-radius: 2px; background: #9a9a9a; }
.apps-row .run.active { background: #323232; }
.run.active::after { width: 16px; left: 12px; background: #ababab; }
.run em { position: absolute; right: 3px; top: 3px; width: 16px; height: 16px; border-radius: 50%; background: #c2185b; display: grid; place-items: center; font-size: 10px; }
.tray { display: flex; align-items: center; padding-right: 19px; }
.warn, .slash { position: relative; }
.warn { margin: 0 16px 0 17px; }
.warn em { position: absolute; left: 7px; top: 3px; width: 9px; height: 9px; border-radius: 50%; background: #fce100; color: #000; font-size: 8px; font-weight: 700; display: grid; place-items: center; }
.slash { margin-left: 15px; }
.slash .line { position: absolute; left: 0; top: -1px; }
.eng { margin: 0 18px 0 18px; width: 24px; letter-spacing: -.35px; }
.mute { margin: 0 8px; }
.clock { width: 58px; margin-left: 6px; text-align: right; letter-spacing: -.15px; }
.clock span { display: block; line-height: 16px; }
```
